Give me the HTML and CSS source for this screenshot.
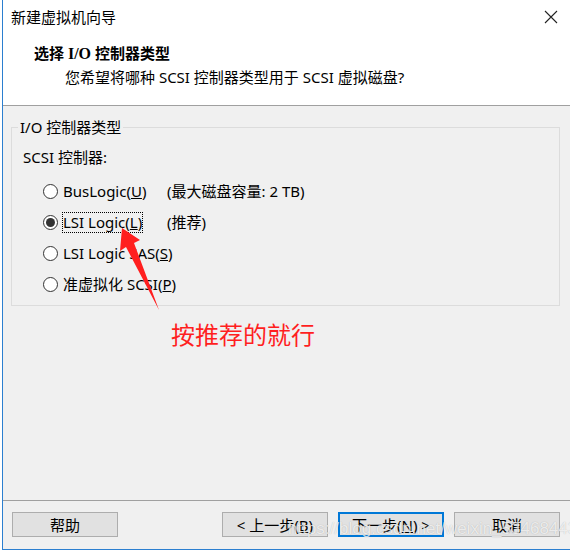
FILE: index.html
```html
<!DOCTYPE html>
<html lang="zh-CN">
<head>
    <meta charset="UTF-8">
    <title>新建虚拟机向导</title>
    <link rel="stylesheet" href="styles.css">
</head>
<body>

<div class="window">
    <!-- Title bar -->
    <div class="titlebar">
        <span class="title">新建虚拟机向导</span>
        <svg class="close" width="14" height="14" viewBox="0 0 14 14">
            <path d="M1 1 L13 13 M13 1 L1 13" stroke="#222" stroke-width="1.1" fill="none"/>
        </svg>
    </div>

    <!-- Page header -->
    <div class="header">
        <h1>选择 <span class="serif">I/O</span> 控制器类型</h1>
        <p>您希望将哪种 SCSI 控制器类型用于 SCSI 虚拟磁盘?</p>
    </div>

    <!-- Wizard body -->
    <div class="content">
        <fieldset class="group">
            <legend>I/O 控制器类型</legend>
            <div class="sub">SCSI 控制器:</div>
            <div class="options">
                <label class="opt"><span class="radio"></span><span>BusLogic(<u>U</u>)</span></label>
                <span class="note">(最大磁盘容量: 2 TB)</span>

                <label class="opt"><span class="radio checked"></span><span class="focus">LSI Logic(<u>L</u>)</span></label>
                <span class="note">(推荐)</span>

                <label class="opt"><span class="radio"></span><span>LSI Logic SAS(<u>S</u>)</span></label>
                <span></span>

                <label class="opt"><span class="radio"></span><span>准虚拟化 SCSI(<u>P</u>)</span></label>
                <span></span>
            </div>
        </fieldset>

        <div class="remark">按推荐的就行</div>

        <!-- annotation arrow -->
        <svg class="arrow" width="570" height="551" viewBox="0 0 570 551">
            <polygon points="122,228 140,240 134,243 159,310 126,247 120,251" fill="#ff1f1f"/>
        </svg>
    </div>

    <!-- Buttons -->
    <div class="footer">
        <button>帮助</button>
        <div class="nav">
            <button>&lt; 上一步(<u>B</u>)</button>
            <button class="primary">下一步(<u>N</u>) &gt;</button>
            <button>取消</button>
        </div>
    </div>

    <div class="watermark">https://blog.csdn.net/weixin_53468443</div>
</div>

</body>
</html>
```

FILE: styles.css
```css
* {
    margin: 0;
    padding: 0;
    box-sizing: border-box;
}
body {
    background: #fff;
    width: 570px;
    height: 551px;
    overflow: hidden;
    font-family: "Noto Sans", "Noto Sans CJK SC", sans-serif;
    font-size: 15px;
    color: #000;
}
.window {
    position: relative;
    margin-left: 2px;
    width: 568px;
    height: 550px;
    border-left: 1px solid #2b7fd0;
    border-bottom: 1px solid #2b7fd0;
    background: #f0f0f0;
    display: flex;
    flex-direction: column;
}
.titlebar {
    height: 34px;
    background: #fff;
    display: flex;
    align-items: center;
    justify-content: space-between;
    padding: 0 12px 0 8px;
}
.title {
    line-height: 20px;
}
.header {
    background: #fff;
    height: 72px;
    border-bottom: 1px solid #a0a0a0;
    padding: 9px 0 0 31px;
}
.header h1 {
    font-size: 15px;
    font-weight: bold;
    line-height: 20px;
}
.serif {
    font-family: "Liberation Serif", serif;
    font-size: 16px;
}
.header p {
    line-height: 20px;
    margin-top: 3px;
    padding-left: 31px;
}
.content {
    flex: 1;
    padding: 11px 10px 0 8px;
}
.group {
    border: 1px solid #dcdcdc;
    padding: 0 0 5px 11px;
}
.group legend {
    line-height: 20px;
    padding: 0 2px;
    margin-left: -5px;
}
.sub {
    line-height: 20px;
    margin-top: 10px;
}
.options {
    display: grid;
    grid-template-columns: 124px auto;
    grid-auto-rows: 31px;
    align-items: center;
    padding-left: 20px;
    margin-top: 9px;
}
.opt {
    display: flex;
    align-items: center;
    gap: 5px;
    white-space: nowrap;
    line-height: 19px;
}
.radio {
    width: 15px;
    height: 15px;
    border: 1px solid #333;
    border-radius: 50%;
    background: #fff;
    display: flex;
    align-items: center;
    justify-content: center;
    flex: none;
}
.radio.checked::after {
    content: "";
    width: 9px;
    height: 9px;
    border-radius: 50%;
    background: #333;
}
.focus {
    border: 1px dotted #000;
    margin: -1px;
}
.note {
    white-space: nowrap;
    line-height: 19px;
}
.remark {
    color: #ff1f1f;
    font-size: 24px;
    line-height: 30px;
    margin: 14px 0 0 160px;
}
.arrow {
    position: absolute;
    left: -3px;
    top: 0;
    pointer-events: none;
}
.footer {
    height: 49px;
    border-top: 1px solid #a0a0a0;
    display: flex;
    justify-content: space-between;
    padding: 11px 10px 0 9px;
}
.nav {
    display: flex;
    gap: 10px;
}
button {
    width: 106px;
    height: 25px;
    background: #e1e1e1;
    border: 1px solid #adadad;
    font-family: "Noto Sans", "Noto Sans CJK SC", sans-serif;
    font-size: 15px;
    color: #000;
}
button.primary {
    border: 2px solid #0078d7;
}
.watermark {
    position: absolute;
    left: 285px;
    top: 519px;
    font-family: "Liberation Sans", sans-serif;
    font-size: 17px;
    color: rgba(255, 255, 255, 0.75);
    text-shadow: 0 0 1px rgba(0, 0, 0, 0.25);
    white-space: nowrap;
}
```
